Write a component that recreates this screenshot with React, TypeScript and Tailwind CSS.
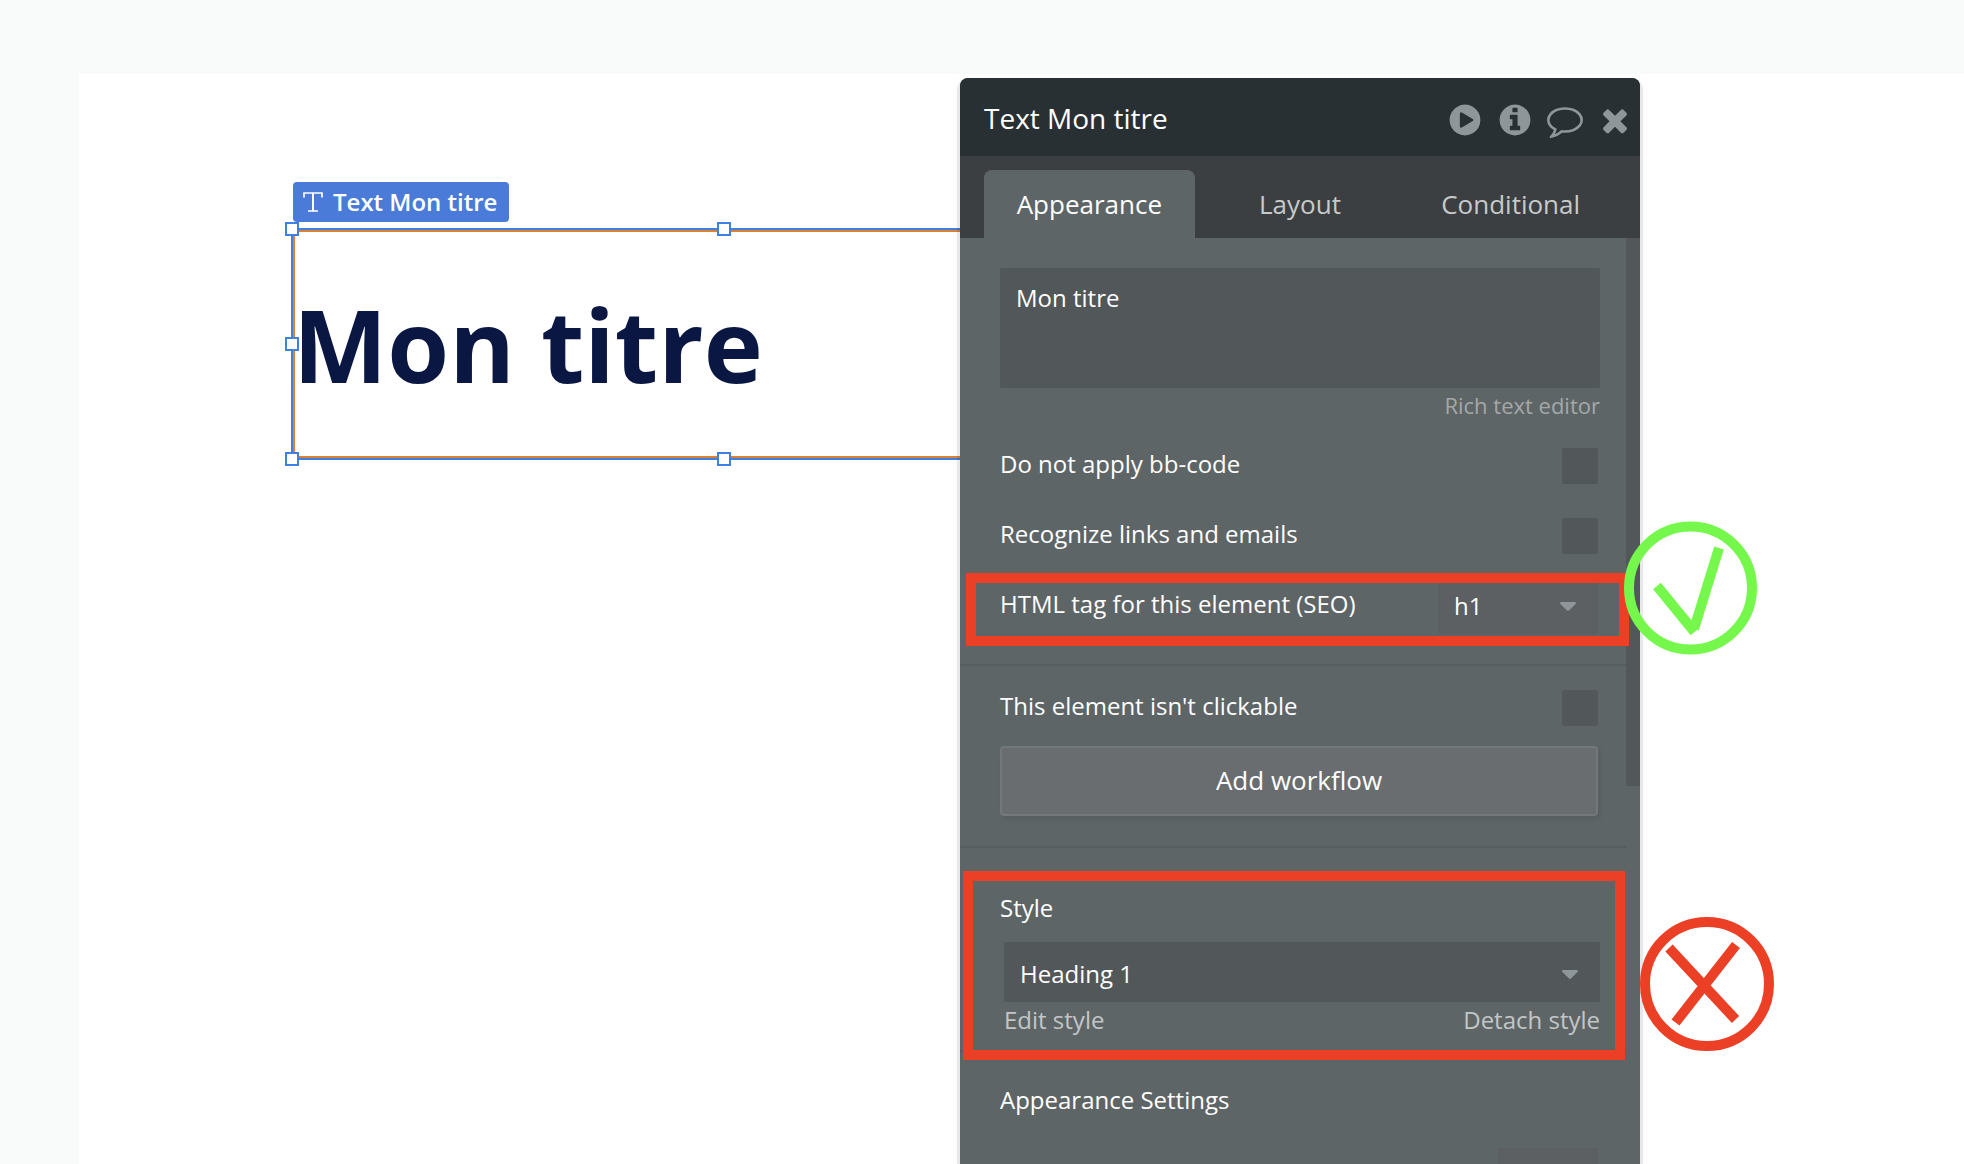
import React from "react";

const FONT = "font-['Open_Sans','Noto_Sans',sans-serif]";

const DISC =
  "M1664 896q0 209-103 385.5t-279.5 279.5-385.5 103-385.5-103-279.5-279.5-103-385.5 103-385.5 279.5-279.5 385.5-103 385.5 103 279.5 279.5 103 385.5z";

const ICONS = {
  Preview:
    "M1312 896q0-37-32-55l-544-320q-31-19-64-1-32 19-32 56v640q0 37 32 56 16 8 32 8 17 0 32-9l544-320q32-18 32-55z" +
    DISC,
  Information:
    "M1152 1376v-160q0-14-9-23t-23-9h-96V672q0-14-9-23t-23-9H672q-14 0-23 9t-9 23v160q0 14 9 23t23 9h96v320h-96q-14 0-23 9t-9 23v160q0 14 9 23t23 9h448q14 0 23-9t9-23zM1024 480V320q0-14-9-23t-23-9H800q-14 0-23 9t-9 23v160q0 14 9 23t23 9h192q14 0 23-9t9-23z" +
    DISC,
  Comment:
    "M896 384q-204 0-381.5 69.5T232.5 641.5 128 896q0 112 71.5 213.5T401 1285l87 50-27 96q-24 91-70 172 152-63 275-171l43-38 57 6q69 8 130 8 204 0 381.5-69.5t282-187.5T1664 896t-104.5-254.5-282-188T896 384zm896 512q0 174-120 321.5t-326 233-450 85.5q-70 0-145-8-198 175-460 242-49 14-114 22h-5q-15 0-27-10.5t-16-27.5v-1q-3-4-.5-12t2-10 4.5-9.5l6-9 7-8.5 8-9q7-8 31-34.5t34.5-38 31-39.5 32.5-51 27-59 26-76q-157-89-247.5-220T0 896q0-174 120-321.5t326-233T896 256t450 85.5 326 233T1792 896z",
  Close:
    "M1490 1322q0 40-28 68l-136 136q-28 28-68 28t-68-28l-294-294-294 294q-28 28-68 28t-68-28l-136-136q-28-28-28-68t28-68l294-294-294-294q-28-28-28-68t28-68l136-136q28-28 68-28t68 28l294 294 294-294q28-28 68-28t68 28l136 136q28 28 28 68t-28 68l-294 294 294 294q28 28 28 68z",
};

const HANDLES = [
  "left-0 top-0",
  "left-1/2 top-0",
  "left-full top-0",
  "left-0 top-1/2",
  "left-full top-1/2",
  "left-0 top-full",
  "left-1/2 top-full",
  "left-full top-full",
];

function CheckRow({ id, label }: { id: string; label: string }) {
  return (
    <div className="flex items-start justify-between pr-0.5">
      <label htmlFor={id}>{label}</label>
      <input id={id} type="checkbox" className="size-9 appearance-none rounded-xs bg-[#525759] checked:bg-[#4a7bd8]" />
    </div>
  );
}

function Dropdown({ id, value, className }: { id: string; value: string; className: string }) {
  return (
    <div className={`relative h-[60px] rounded-xs ${className}`}>
      <select id={id} defaultValue={value} className="size-full appearance-none bg-transparent pt-1 pl-4 text-white">
        <option>{value}</option>
      </select>
      <svg viewBox="0 0 16 9" className="pointer-events-none absolute top-7 right-[22px] h-[9px] w-4" fill="#8f9699">
        <path d="M1 0h14q1.5 0.6 0.6 2L9 8.4q-1 0.9-2 0L0.400 2Q-0.500 0.600 1 0z" />
      </svg>
    </div>
  );
}

function SelectedElement() {
  return (
    <div className="absolute top-[108px] left-[212px] w-[866px]">
      <div className="ml-0.5 flex h-10 w-fit items-center gap-2.5 rounded-sm bg-[#4a7bd8] pr-3 pl-2.5 text-2xl font-semibold text-white">
        <svg viewBox="0 0 20 20" className="size-5" fill="none" stroke="white">
          <path d="M1 5.500V1h18v4.500M5 19h10" strokeWidth="1.700" />
          <path d="M10 1v18" strokeWidth="2" />
        </svg>
        Text Mon titre
      </div>
      <div className="relative mt-1.5 h-[232px] border-2 border-[#3f80e0]">
        <div className="flex h-full items-center inset-ring-2 inset-ring-[#db8233]">
          <h1 className="text-[100px] leading-[136px] font-bold text-[#0a1743]">Mon titre</h1>
        </div>
        <div className="absolute -inset-px">
          {HANDLES.map((place) => (
            <span
              key={place}
              className={`absolute size-3.5 -translate-x-1/2 -translate-y-1/2 border-2 border-[#3f80e0] bg-white ${place}`}
            />
          ))}
        </div>
      </div>
    </div>
  );
}

function PropertyEditor() {
  return (
    <section className="absolute top-1 bottom-0 left-[881px] w-[680px]">
      <div className="flex h-full flex-col overflow-hidden rounded-t-lg bg-[#5e6566] shadow-[0_4px_0_3px_rgba(0,0,0,0.08),0_2px_8px_4px_rgba(0,0,0,0.02)]">
        <header className="flex h-[78px] shrink-0 items-center justify-between bg-[#293033] pt-0.5 pr-[7px] pl-6 text-white">
          <h2 className="text-[28px] leading-[38px]">Text Mon titre</h2>
          <div className="flex gap-3.5 pt-1">
            {Object.entries(ICONS).map(([name, d]) => (
              <button key={name} type="button" aria-label={name}>
                <svg viewBox="0 0 1792 1792" className="size-9" fill="#8f9699" fillRule="evenodd">
                  <path d={d} />
                </svg>
              </button>
            ))}
          </div>
        </header>

        <nav className="grid h-[82px] shrink-0 grid-cols-3 bg-[#3b3f42] px-6 pt-3.5 text-[26px] leading-9 text-[#c8caca]">
          <button type="button" className="rounded-t-lg bg-[#5e6566] text-white">
            Appearance
          </button>
          <button type="button">Layout</button>
          <button type="button">Conditional</button>
        </nav>

        <div className="flex min-h-0 flex-1 overflow-hidden text-2xl text-white">
          <div className="min-w-0 flex-1">
            <div className="flex h-[426px] flex-col pt-[30px] pr-[26px] pl-10">
              <textarea
                aria-label="Text"
                defaultValue="Mon titre"
                className="block h-[120px] w-full shrink-0 resize-none rounded-xs bg-[#525759] px-4 py-3.5"
              />
              <a href="#rich-text" className="mt-0.5 mb-7 self-end text-[22px] leading-[30px] text-[#a4a8a9]">
                Rich text editor
              </a>
              <div className="flex flex-col gap-[34px]">
                <CheckRow id="bbcode" label="Do not apply bb-code" />
                <CheckRow id="links" label="Recognize links and emails" />
              </div>
              <div className="flex justify-between pt-5 pr-0.5">
                <label htmlFor="tag" className="pt-3.5">
                  HTML tag for this element (SEO)
                </label>
                <Dropdown id="tag" value="h1" className="w-40 bg-[#5c6063]" />
              </div>
            </div>

            <div className="border-t-2 border-[#585d5f] pt-6 pr-[26px] pb-[30px] pl-10">
              <CheckRow id="clickable" label="This element isn't clickable" />
              <div className="pt-5 pr-0.5">
                <button
                  type="button"
                  className="h-[70px] w-full rounded-sm border-2 border-[#73787a] bg-[#6a6d70] pb-0.5 text-[26px] leading-9 shadow-[2px_3px_4px_rgba(0,0,0,0.08)]"
                >
                  Add workflow
                </button>
              </div>
            </div>

            <div className="border-t-2 border-[#585d5f] pt-11 pr-[26px] pb-3.5 pl-10">
              <label htmlFor="style">Style</label>
              <div className="pt-[18px] pl-1">
                <Dropdown id="style" value="Heading 1" className="bg-[#525759]" />
                <div className="flex justify-between pt-0.5 text-[#c3c6c7]">
                  <a href="#edit-style">Edit style</a>
                  <a href="#detach-style">Detach style</a>
                </div>
              </div>
            </div>

            <div className="border-t-2 border-[#585d5f] pt-8 pr-7 pl-10">
              <h3>Appearance Settings</h3>
              <div className="mt-8 ml-auto h-[60px] w-[100px] rounded-xs bg-[#5c6063]" />
            </div>
          </div>
          <div className="h-[548px] w-3.5 shrink-0 self-start bg-[#525759]" />
        </div>
      </div>

      {/* Callouts drawn over the panel */}
      <div className="pointer-events-none absolute top-[495px] left-1.5 h-[73px] w-[663px] border-10 border-[#eb4025]" />
      <div className="pointer-events-none absolute top-[793px] left-[3px] h-[189px] w-[662px] border-10 border-[#eb4025]" />
      <svg
        viewBox="0 0 134 134"
        className="pointer-events-none absolute top-[443px] left-[664px] size-[134px]"
        fill="none"
        stroke="#75f74c"
        strokeWidth="10"
      >
        <circle cx="66.500" cy="67" r="61.500" />
        <path d="M33 65L70.500 111" />
        <path d="M95 27L70 108" />
      </svg>
      <svg
        viewBox="0 0 134 134"
        className="pointer-events-none absolute top-[839px] left-[680px] size-[134px]"
        fill="none"
        stroke="#eb4025"
        strokeWidth="10"
      >
        <circle cx="67" cy="67" r="62" />
        <path d="M29 31L95.500 102.500M96 28L35.500 105.500" />
      </svg>
    </section>
  );
}

export default function App() {
  return (
    <main className={`flex h-screen overflow-hidden bg-[#f8fbfa] pt-[74px] pl-[79px] ${FONT}`}>
      <div className="relative flex-1 bg-white">
        <SelectedElement />
        <PropertyEditor />
      </div>
    </main>
  );
}
